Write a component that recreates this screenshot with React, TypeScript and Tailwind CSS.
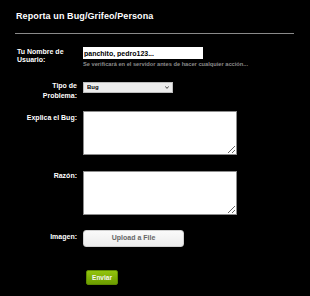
import React from "react";

const labelCls = "w-[60px] shrink-0 text-right text-[7px] font-bold text-white";

const App = () => {
  return (
    <div
      className="w-[310px] h-[296px] bg-black overflow-hidden"
      style={{ fontFamily: '"Liberation Sans", Arial, sans-serif' }}
    >
      <div className="pl-[16px] pr-[16px] pt-[11px]">
        <h1 className="text-[9px] leading-[11px] font-bold text-white tracking-[0.1px]">
          Reporta un Bug/Grifeo/Persona
        </h1>
        <div className="mt-[11px] h-px w-[279px] -ml-px bg-[#8a8a8a]" />
      </div>

      <form className="pl-[17px] flex flex-col">
        {/* nombre */}
        <div className="mt-[13px] flex items-start gap-[6px]">
          <label className="w-[60px] shrink-0 pt-[1px] text-[7px] leading-[8px] font-bold text-white">
            Tu Nombre de Usuario:
          </label>
          <div className="flex flex-col">
            <input
              type="text"
              defaultValue="panchito, pedro123..."
              className="block w-[120px] h-[12px] bg-white px-[1px] text-[7px] font-bold text-black outline-none"
            />
            <span className="mt-[2px] text-[5.7px] leading-[6px] font-bold text-[#8c8c8c] whitespace-nowrap">
              Se verificará en el servidor antes de hacer cualquier acción...
            </span>
          </div>
        </div>

        {/* tipo */}
        <div className="mt-[15px] flex items-start gap-[6px]">
          <label className={labelCls + " leading-[10px] -mt-[1px]"}>
            Tipo de Problema:
          </label>
          <div className="relative text-[0px] leading-none">
            <select className="block w-[90px] h-[11px] appearance-none bg-[#ececec] border border-[#bdbdbd] pl-[3px] py-0 text-[6px] leading-[9px] font-bold text-black outline-none">
              <option>Bug</option>
              <option>Grifeo</option>
              <option>Persona</option>
            </select>
            <svg
              className="absolute right-[4px] top-[4px] pointer-events-none"
              width="4"
              height="3"
              viewBox="0 0 4 3"
            >
              <path d="M0.3 0.4 L2 2.4 L3.7 0.4" stroke="#333" strokeWidth="0.9" fill="none" />
            </svg>
          </div>
        </div>

        {/* explica */}
        <div className="mt-[10px] flex items-start gap-[6px]">
          <label className={labelCls + " leading-[9px] pt-[2px]"}>Explica el Bug:</label>
          <textarea className="block w-[154px] h-[44px] bg-white border border-[#8d8d8d] outline-none" />
        </div>

        {/* razon */}
        <div className="mt-[16px] flex items-start gap-[6px]">
          <label className={labelCls + " leading-[9px]"}>Razón:</label>
          <textarea className="block w-[154px] h-[44px] bg-white border border-[#8d8d8d] outline-none" />
        </div>

        {/* imagen */}
        <div className="mt-[15px] flex items-start gap-[6px]">
          <label className={labelCls + " leading-[9px] pt-[2px]"}>Imagen:</label>
          <button
            type="button"
            className="block w-[101px] h-[17px] rounded-[3px] border border-[#d0d0d0] bg-gradient-to-b from-[#fafafa] to-[#ececec] text-[7px] font-bold text-[#666]"
          >
            Upload a File
          </button>
        </div>

        <div className="mt-[23px] pl-[69px]">
          <button
            type="submit"
            className="block w-[32px] h-[15px] rounded-[2px] border border-[#5e8a00] bg-gradient-to-b from-[#93c40e] to-[#6c9d00] text-[6.5px] font-bold text-[#f4f4f4]"
          >
            Enviar
          </button>
        </div>
      </form>
    </div>
  );
};

export default App;
